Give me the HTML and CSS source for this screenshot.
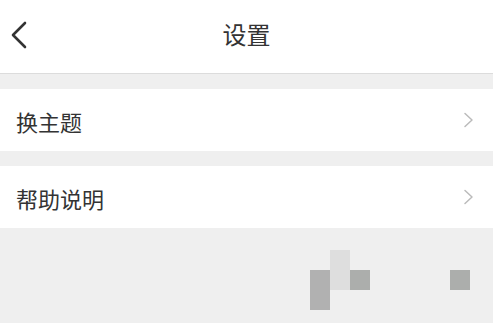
FILE: index.html
```html
<!DOCTYPE html>
<html lang="zh">
<head>
<meta charset="utf-8">
<link rel="stylesheet" href="styles.css">
</head>
<body>
<div class="page">
  <header class="header">
    <svg class="back" width="18" height="28" viewBox="0 0 18 28"><path d="M15 2 L3 14 L15 26" fill="none" stroke="#333" stroke-width="2.6" stroke-linecap="round" stroke-linejoin="round"/></svg>
    <div class="title">设置</div>
  </header>
  <div class="gap"></div>
  <div class="row">
    <span class="label">换主题</span>
    <svg class="chev" width="12" height="16" viewBox="0 0 12 16"><path d="M2 1.5 L9 8 L2 14.5" fill="none" stroke="#bbb" stroke-width="1.5" stroke-linecap="round" stroke-linejoin="round"/></svg>
  </div>
  <div class="gap"></div>
  <div class="row">
    <span class="label">帮助说明</span>
    <svg class="chev" width="12" height="16" viewBox="0 0 12 16"><path d="M2 1.5 L9 8 L2 14.5" fill="none" stroke="#bbb" stroke-width="1.5" stroke-linecap="round" stroke-linejoin="round"/></svg>
  </div>
  <div class="footer">
    <div class="mosaic">
      <div class="c"></div><div class="c light"></div><div class="c"></div><div class="c"></div><div class="c"></div><div class="c"></div><div class="c"></div><div class="c"></div>
      <div class="c dark"></div><div class="c light"></div><div class="c dark2"></div><div class="c"></div><div class="c"></div><div class="c"></div><div class="c"></div><div class="c dark2"></div>
      <div class="c dark"></div><div class="c"></div><div class="c"></div><div class="c"></div><div class="c"></div><div class="c"></div><div class="c"></div><div class="c"></div>
    </div>
  </div>
</div>
</body>
</html>
```

FILE: styles.css
```css
* { box-sizing: border-box; }
html, body { margin: 0; padding: 0; }
body {
  width: 493px;
  height: 323px;
  overflow: hidden;
  background: #efefef;
  font-family: "Noto Sans CJK SC", "Noto Sans", sans-serif;
  color: #333;
}
.page { display: flex; flex-direction: column; height: 323px; }
.header {
  height: 74px;
  background: #fff;
  border-bottom: 1px solid #dcdcdc;
  display: flex;
  align-items: center;
  justify-content: center;
  position: relative;
}
.back { position: absolute; left: 10px; top: 21px; }
.title { font-size: 24px; line-height: 1; margin-top: -6px; font-weight: 400; color: #333; }
.gap { height: 15px; background: #efefef; }
.row {
  height: 62px;
  background: #fff;
  display: flex;
  align-items: center;
  justify-content: space-between;
  padding: 0 18px 0 16px;
}
.label { font-size: 22px; line-height: 1; margin-top: 1px; font-weight: 400; color: #333; }
.footer { flex: 1; background: #efefef; padding: 22px 0 0 310px; }
.mosaic {
  display: grid;
  grid-template-columns: repeat(8, 20px);
  grid-auto-rows: 20px;
}
.c.light { background: #dedede; }
.c.dark { background: #b1b1b1; }
.c.dark2 { background: #acaeac; }
```
